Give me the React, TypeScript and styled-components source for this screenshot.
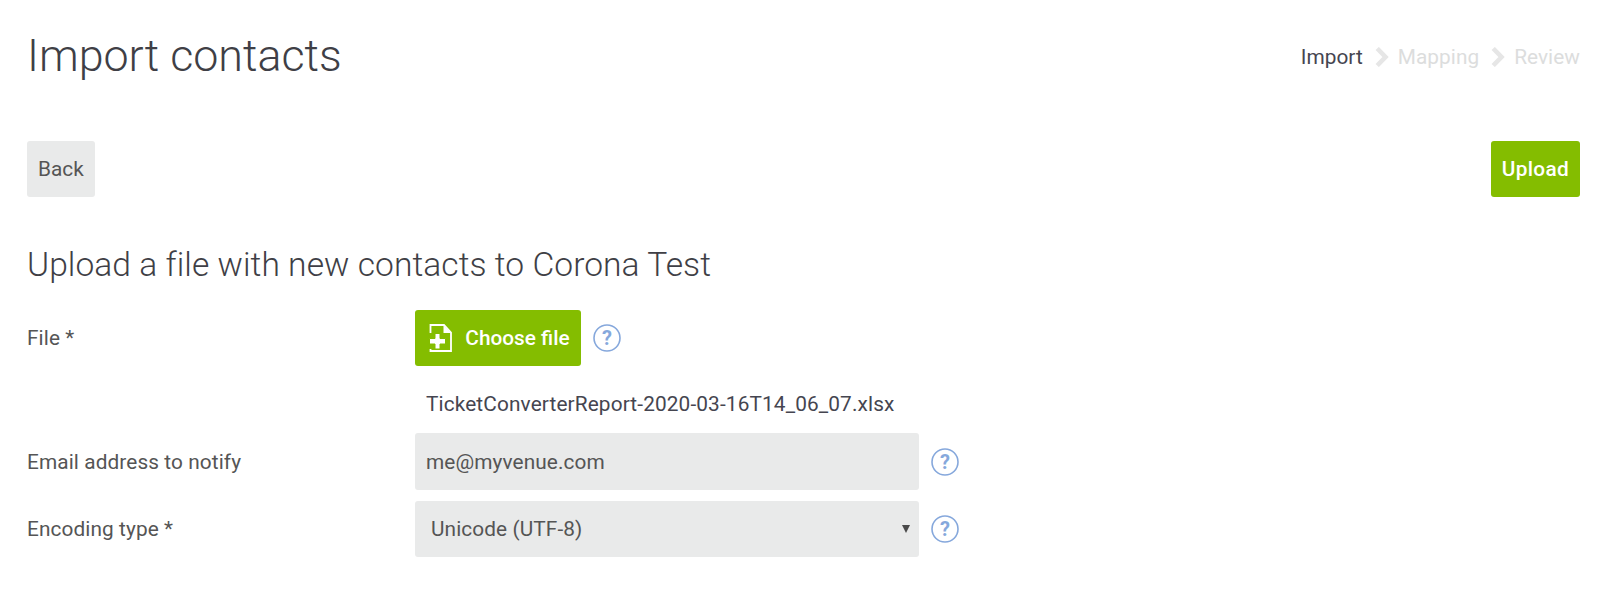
import React from "react";
import styled, { createGlobalStyle } from "styled-components";

const Global = createGlobalStyle`
  html, body { margin: 0; padding: 0; background: #fff; }
  body { font-family: Roboto, "Liberation Sans", sans-serif; color: #555; overflow: hidden; }
`;

const Page = styled.div`
  padding: 22px 20px 0 27px;
  height: 599px;
  box-sizing: border-box;
`;

const Header = styled.header`
  display: flex;
  justify-content: space-between;
  align-items: flex-start;
  height: 119px;
`;

const Title = styled.h1`
  margin: 0;
  font-size: 44.8px;
  line-height: 68px;
  font-weight: 300;
  color: #3f3f46;
`;

const Steps = styled.ol`
  list-style: none;
  display: flex;
  align-items: center;
  gap: 12px;
  margin: 21px 0 0;
  padding: 0;
  font-size: 20.8px;
  line-height: 28px;
  letter-spacing: 0.05px;
`;

const Step = styled.li<{ $active?: boolean }>`
  display: flex;
  align-items: center;
  gap: 9px;
  color: ${(p) => (p.$active ? "#454550" : "#dcdddd")};
`;

const Toolbar = styled.div`
  display: flex;
  justify-content: space-between;
`;

const Button = styled.button<{ $primary?: boolean }>`
  display: inline-flex;
  align-items: center;
  justify-content: center;
  height: 56px;
  padding: 0 11px;
  border: 0;
  border-radius: 3px;
  font-family: inherit;
  font-size: 20.8px;
  font-weight: ${(p) => (p.$primary ? 500 : 400)};
  letter-spacing: ${(p) => (p.$primary ? "0.3px" : "0")};
  background: ${(p) => (p.$primary ? "#84bd00" : "#e9eaea")};
  color: ${(p) => (p.$primary ? "#fff" : "#555")};
`;

const Subtitle = styled.h2`
  margin: 46px 0 0;
  font-size: 33.6px;
  line-height: 44px;
  font-weight: 300;
  letter-spacing: 0.05px;
  color: #3f3f46;
`;

const Form = styled.form`
  display: grid;
  grid-template-columns: 388px 504px 1fr;
  align-items: center;
  margin-top: 23px;
`;

const Label = styled.label<{ $shift?: boolean }>`
  font-size: 20.8px;
  letter-spacing: 0.1px;
  color: #555;
  margin-top: ${(p) => (p.$shift ? 11 : 0)}px;
`;

const FileCell = styled.div`
  display: flex;
  align-items: center;
  grid-column: 2 / 4;
  gap: 12px;
`;

const FileButton = styled(Button)`
  gap: 12px;
  width: 166px;
  padding: 0 0 0 3px;
  letter-spacing: 0;
`;

const FileName = styled.div`
  grid-column: 2 / 4;
  margin: 24px 0 15px;
  padding-left: 11px;
  font-size: 20.8px;
  line-height: 28px;
  letter-spacing: 0.13px;
  color: #454550;
`;

const FieldRow = styled.div`
  display: contents;
`;

const TextField = styled.input`
  box-sizing: border-box;
  width: 504px;
  height: 57px;
  padding: 0 11px;
  border: 0;
  border-radius: 3px;
  background: #e9eaea;
  font-family: inherit;
  font-size: 20.8px;
  letter-spacing: 0.1px;
  color: #555;
`;

const SelectBox = styled.div`
  position: relative;
  display: flex;
  align-items: center;
  box-sizing: border-box;
  width: 504px;
  height: 56px;
  margin-top: 11px;
  padding-left: 16px;
  border-radius: 3px;
  background: #e9eaea;
  font-size: 20.8px;
  letter-spacing: 0.1px;
  color: #555;
`;

const Caret = styled.span`
  position: absolute;
  right: 9px;
  top: 24px;
  width: 0;
  height: 0;
  border-left: 4px solid transparent;
  border-right: 4px solid transparent;
  border-top: 8px solid #4a4a4a;
`;

const HelpWrap = styled.span<{ $offset?: number }>`
  display: inline-flex;
  margin-left: ${(p) => (p.$offset ? 12 : 0)}px;
  margin-top: ${(p) => p.$offset ?? 0}px;
`;

const Chevron = () => (
  <svg width="14" height="20" viewBox="0 0 14 20">
    <path d="M2.2 1.500l8.300 8.500-8.300 8.500" fill="none" stroke="#e6e6e6" strokeWidth="4.600" />
  </svg>
);

const Help = () => (
  <svg width="28" height="28" viewBox="0 0 28 28">
    <circle cx="14" cy="14" r="13" fill="none" stroke="#86a8dc" strokeWidth="1.600" />
    <text x="14" y="21" textAnchor="middle" fontFamily="Roboto, sans-serif" fontWeight="700" fontSize="20" fill="#86a8dc">?</text>
  </svg>
);

const FilePlus = () => (
  <svg width="24" height="30" viewBox="0 0 24 30">
    <path d="M1.500 10V2H15l7 7.500V28H1.500v-2" fill="none" stroke="#fff" strokeWidth="1.800" />
    <path d="M14.500 2v8h7.500z" fill="#fff" />
    <path d="M6 10.500v5H.5v5.500H6v5h5v-5h5.500v-5.500H11v-5z" fill="#fff" stroke="#84bd00" strokeWidth="1" />
  </svg>
);

export default function App() {
  return (
    <Page>
      <Global />
      <Header>
        <Title>Import contacts</Title>
        <Steps>
          <Step $active>Import</Step>
          <Step><Chevron />Mapping</Step>
          <Step><Chevron />Review</Step>
        </Steps>
      </Header>
      <Toolbar>
        <Button type="button">Back</Button>
        <Button type="button" $primary>Upload</Button>
      </Toolbar>
      <Subtitle>Upload a file with new contacts to Corona Test</Subtitle>
      <Form>
        <Label>File *</Label>
        <FileCell>
          <FileButton type="button" $primary><FilePlus />Choose file</FileButton>
          <Help />
        </FileCell>
        <span />
        <FileName>TicketConverterReport-2020-03-16T14_06_07.xlsx</FileName>
        <FieldRow>
          <Label>Email address to notify</Label>
          <TextField defaultValue="me@myvenue.com" />
          <HelpWrap $offset={1}><Help /></HelpWrap>
        </FieldRow>
        <FieldRow>
          <Label $shift>Encoding type *</Label>
          <SelectBox>Unicode (UTF-8)<Caret /></SelectBox>
          <HelpWrap $offset={11}><Help /></HelpWrap>
        </FieldRow>
      </Form>
    </Page>
  );
}
